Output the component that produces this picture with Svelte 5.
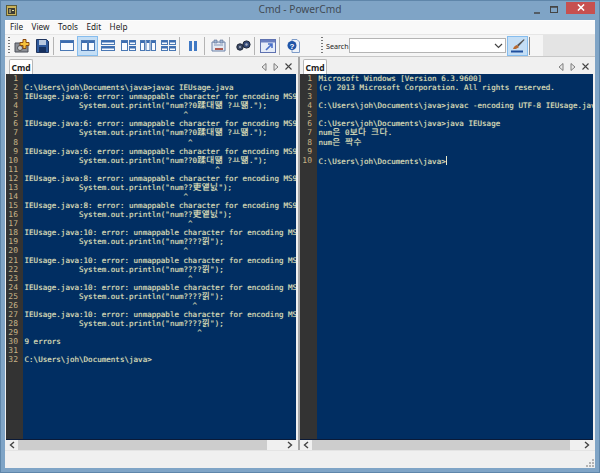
<script>
	const caret = (n) => ' '.repeat(n) + '^';
	const err = (n) => `IEUsage.java:${n}: error: unmappable character for encoding MS949`;
	const ind = (s) => `            System.out.println("num${s}");`;

	const leftLines = [
		'',
		'C:\\Users\\joh\\Documents\\java>javac IEUsage.java',
		err(6), ind('??0蹂대떎 ?ㅛ떎.'), caret(35),
		err(6), ind('??0蹂대떎 ?ㅛ떎.'), caret(36),
		err(6), ind('??0蹂대떎 ?ㅛ떎.'), caret(42),
		err(8), ind('??吏앹닔'), caret(35),
		err(8), ind('??吏앹닔'), caret(36),
		err(10), ind('????낅'), caret(35),
		err(10), ind('????낅'), caret(36),
		err(10), ind('????낅'), caret(37),
		err(10), ind('????낅'), caret(38),
		'9 errors',
		'',
		'C:\\Users\\joh\\Documents\\java>'
	];

	const rightLines = [
		'Microsoft Windows [Version 6.3.9600]',
		'(c) 2013 Microsoft Corporation. All rights reserved.',
		'',
		'C:\\Users\\joh\\Documents\\java>javac -encoding UTF-8 IEUsage.java',
		'',
		'C:\\Users\\joh\\Documents\\java>java IEUsage',
		'num은 0보다 크다.',
		'num은 짝수',
		'',
		'C:\\Users\\joh\\Documents\\java>'
	];

	// split a line into ascii runs and double-width runs
	function parts(line) {
		return line.split(/([^\x00-\x7f]+)/).map((text, i) => ({ text, wide: i % 2 === 1 }));
	}

	const panes = [
		{ id: 'left', lines: leftLines, cursor: false },
		{ id: 'right', lines: rightLines, cursor: true }
	];

	const menus = ['File', 'View', 'Tools', 'Edit', 'Help'];
</script>

<div class="window">
	<header class="title">
		<svg class="appicon" width="11" height="11" viewBox="0 0 11 11">
			<rect x="0.5" y="0.5" width="10" height="10" fill="#c9b25a" stroke="#5a5a3a" />
			<rect x="2" y="3" width="7" height="6" fill="#3c3c34" />
			<path d="M3 5h2M3 7h2M6 5.5h2" stroke="#e8e0a0" />
		</svg>
		<span class="caption">Cmd - PowerCmd</span>
		<div class="controls">
			<svg width="10" height="10" viewBox="0 0 10 10"><path d="M2 8h6" stroke="#444" stroke-width="1.5" /></svg>
			<svg width="10" height="10" viewBox="0 0 10 10"><rect x="1.5" y="1.5" width="7" height="6" fill="none" stroke="#444" /><path d="M1 2h8" stroke="#444" stroke-width="1.5" /></svg>
			<div class="close">
				<svg width="8" height="7" viewBox="0 0 9 8"><path d="M1 0.5l7 7M8 0.5l-7 7" stroke="#fff" stroke-width="1.7" /></svg>
			</div>
		</div>
	</header>

	<div class="client">
		<nav class="menubar">
			{#each menus as m}<span>{m}</span>{/each}
		</nav>

		<div class="toolbars">
			<div class="tb first">
				<div class="grip"></div>
				<div class="btn">
					<svg width="16" height="14" viewBox="0 0 16 14">
						<path d="M1 4h13v9H1z" fill="#8b8f96" stroke="#4a4f58" />
						<circle cx="6" cy="9" r="2.5" fill="#c8ccd0" stroke="#555" />
						<path d="M9 0.5h3v3h3v3h-3v3H9v-3H6v-3h3z" fill="#f6c23c" stroke="#8a4a10" />
					</svg>
				</div>
				<div class="btn">
					<svg width="13" height="14" viewBox="0 0 13 14">
						<path d="M0.5 0.5h10l2 2v11H0.5z" fill="#2f5a9c" stroke="#20355f" />
						<rect x="3" y="1" width="7" height="5" fill="#b9c9e0" />
						<rect x="3" y="8" width="7" height="5" fill="#16305e" />
					</svg>
				</div>
				<div class="sep"></div>
				<div class="btn">
					<svg class="lay" width="14" height="11" viewBox="0 0 14 11"><rect x="0.5" y="0.5" width="13" height="10" /><path class="bar" d="M1 2h12" /></svg>
				</div>
				<div class="btn active">
					<svg class="lay" width="14" height="11" viewBox="0 0 14 11"><rect x="0.5" y="0.5" width="6" height="10" /><rect x="7.5" y="0.5" width="6" height="10" /><path class="bar" d="M1 2h5M8 2h5" /></svg>
				</div>
				<div class="btn">
					<svg class="lay" width="14" height="11" viewBox="0 0 14 11"><rect x="0.5" y="0.5" width="13" height="4" /><rect x="0.5" y="6.5" width="13" height="4" /><path class="bar" d="M1 1.5h12M1 7.5h12" /></svg>
				</div>
				<div class="btn">
					<svg class="lay" width="15" height="11" viewBox="0 0 15 11"><rect x="0.5" y="0.5" width="6" height="10" /><rect x="8.5" y="0.5" width="6" height="4" /><rect x="8.5" y="6.5" width="6" height="4" /><path class="bar" d="M1 2h5M9 1.5h5M9 7.5h5" /></svg>
				</div>
				<div class="btn">
					<svg class="lay" width="16" height="11" viewBox="0 0 16 11"><rect x="0.5" y="0.5" width="4" height="10" /><rect x="6" y="0.5" width="4" height="10" /><rect x="11.5" y="0.5" width="4" height="10" /><path class="bar" d="M1 2h3M6.5 2h3M12 2h3" /></svg>
				</div>
				<div class="btn">
					<svg class="lay" width="15" height="11" viewBox="0 0 15 11"><rect x="0.5" y="0.5" width="6" height="4" /><rect x="8.5" y="0.5" width="6" height="4" /><rect x="0.5" y="6.5" width="6" height="4" /><rect x="8.5" y="6.5" width="6" height="4" /><path class="bar" d="M1 1.5h5M9 1.5h5M1 7.5h5M9 7.5h5" /></svg>
				</div>
				<div class="sep"></div>
				<div class="btn">
					<svg width="8" height="10" viewBox="0 0 8 10"><rect x="0" y="0" width="3" height="10" fill="#3f78c4" /><rect x="5" y="0" width="3" height="10" fill="#3f78c4" /></svg>
				</div>
				<div class="sep"></div>
				<div class="btn">
					<svg width="15" height="13" viewBox="0 0 15 13">
						<path d="M1 3h13v9H1z" fill="#e4eaf3" stroke="#6d82a8" />
						<path d="M3 1h3v3H3zM9 1h3v3H9z" fill="#9fb4d2" stroke="#5a6f96" stroke-width="0.6" />
						<path d="M4 10h8" stroke="#b05a50" stroke-width="2" />
						<path d="M3 6h9" stroke="#8296b8" />
					</svg>
				</div>
				<div class="sep"></div>
				<div class="btn">
					<svg width="15" height="11" viewBox="0 0 15 11">
						<circle cx="4" cy="7" r="3.2" fill="#3c4a66" stroke="#1f2738" />
						<circle cx="10.5" cy="4.5" r="3.6" fill="#354a78" stroke="#1f2738" />
						<circle cx="4" cy="7" r="1" fill="#a8b0c0" />
						<circle cx="10.5" cy="4.5" r="1.2" fill="#a8b0c0" />
					</svg>
				</div>
				<div class="sep"></div>
				<div class="btn">
					<svg width="16" height="14" viewBox="0 0 16 14">
						<rect x="0.5" y="0.5" width="15" height="13" fill="#e6ecf8" stroke="#5f72b0" />
						<rect x="1" y="1" width="14" height="2.5" fill="#6a7fc0" />
						<path d="M6 11l6-6M8 5h4v4" fill="none" stroke="#4a70c8" stroke-width="1.6" />
					</svg>
				</div>
				<div class="sep"></div>
				<div class="btn">
					<svg width="13" height="14" viewBox="0 0 13 14">
						<path d="M5 0.5h5l2.5 2.5v10.5H5z" fill="#eef3fa" stroke="#7f9cc8" />
						<circle cx="5" cy="6.5" r="4.5" fill="#1f55a8" />
						<text x="5" y="9.5" class="q">?</text>
					</svg>
				</div>
			</div>
			<div class="tb second">
				<div class="grip"></div>
				<label class="search" for="search">Search</label>
				<div class="combo">
					<input id="search" type="text" />
					<svg width="9" height="6" viewBox="0 0 9 6"><path d="M1 1l3.5 3.5L8 1" fill="none" stroke="#444" stroke-width="1.2" /></svg>
				</div>
				<div class="btn active brush">
					<svg width="15" height="15" viewBox="0 0 15 15">
						<path d="M14 1L7 7l1.5 1.5L14.5 2z" fill="#555" />
						<path d="M3 11c1-3 3-4 4-4l2 2c-1 1-3 2.5-6 2z" fill="#b86a30" />
						<path d="M1 13.5h12" stroke="#1f4f9e" stroke-width="2" />
					</svg>
				</div>
				<div class="sep last"></div>
			</div>
		</div>

		<div class="panes">
			{#each panes as pane (pane.id)}
				<section class="pane {pane.id}">
					<div class="tabs">
						<div class="tab">Cmd</div>
						<div class="tabnav">
							<svg width="6" height="8" viewBox="0 0 6 8"><path d="M5 0.5v7L1 4z" fill="#e8e8e8" stroke="#666" stroke-width="0.8" /></svg>
							<svg width="6" height="8" viewBox="0 0 6 8"><path d="M1 0.5v7L5 4z" fill="#e8e8e8" stroke="#666" stroke-width="0.8" /></svg>
							<svg width="7" height="7" viewBox="0 0 7 7"><path d="M0.5 0.5l6 6M6.5 0.5l-6 6" stroke="#444" stroke-width="1.1" /></svg>
						</div>
					</div>
					<div class="term">
						<div class="gutter">
							{#each pane.lines as _, i}<div class="num">{i + 1}</div>{/each}
						</div>
						<div class="code">
							{#each pane.lines as line, i}
								<div class="line">{#each parts(line) as p}{#if p.wide}<span class="wide-text">{p.text}</span>{:else}{p.text}{/if}{/each}{#if pane.cursor && i === pane.lines.length - 1}<span class="cursor"></span>{/if}</div>
							{/each}
						</div>
					</div>
					<div class="hscroll">
						<svg width="6" height="8" viewBox="0 0 6 8"><path d="M5 1L1.5 4 5 7" fill="none" stroke="#444" stroke-width="1.4" /></svg>
						<div class="thumb"></div>
						<svg width="6" height="8" viewBox="0 0 6 8"><path d="M1 1l3.5 3L1 7" fill="none" stroke="#444" stroke-width="1.4" /></svg>
					</div>
				</section>
			{/each}
		</div>

		<footer class="status">
			<svg width="9" height="9" viewBox="0 0 9 9" fill="#b4b4b4"><rect x="7" y="1" width="2" height="2" /><rect x="4" y="4" width="2" height="2" /><rect x="7" y="4" width="2" height="2" /><rect x="1" y="7" width="2" height="2" /><rect x="4" y="7" width="2" height="2" /><rect x="7" y="7" width="2" height="2" /></svg>
		</footer>
	</div>
</div>

<style>
	:global(body) {
		margin: 0;
	}
	.window {
		width: 600px;
		height: 473px;
		box-sizing: border-box;
		padding: 0 5px 5px;
		background: #7fa4c6;
		box-shadow: inset 0 0 0 1px #5f86aa;
		display: flex;
		flex-direction: column;
		font-family: 'Noto Sans', 'Liberation Sans', sans-serif;
		overflow: hidden;
	}
	.title {
		height: 20px;
		flex: none;
		display: flex;
		align-items: center;
		position: relative;
	}
	.appicon {
		margin-left: 1px;
	}
	.caption {
		position: absolute;
		left: 0;
		right: 0;
		top: 1px;
		text-align: center;
		font-size: 10.2px;
		line-height: 17px;
		color: #3f4a55;
	}
	.controls {
		margin-left: auto;
		display: flex;
		align-items: center;
		gap: 7px;
		height: 20px;
	}
	.close {
		width: 29px;
		height: 12px;
		margin-bottom: 5px;
		background: #c75050;
		display: flex;
		align-items: center;
		justify-content: center;
	}
	.client {
		flex: 1;
		min-height: 0;
		display: flex;
		flex-direction: column;
		background: #f0f0f0;
	}
	.menubar {
		height: 13px;
		flex: none;
		display: flex;
		gap: 8.5px;
		padding-left: 5px;
		font-size: 8.2px;
		line-height: 11px;
		color: #222;
		background: #f9f9f9;
		border-top: 1px solid #fdfdfd;
	}
	.toolbars {
		height: 21px;
		flex: none;
		display: flex;
		background: #e4e4e4;
		border-top: 1px solid #e6e6e6;
		border-bottom: 1px solid #c8c8c8;
	}
	.tb {
		display: flex;
		align-items: center;
		background: #f5f5f5;
	}
	.first {
		width: 315px;
		padding-left: 2px;
		box-sizing: border-box;
	}
	.second {
		width: 223px;
	}
	.grip {
		width: 2px;
		height: 17px;
		margin: 0 3px 0 1px;
		background: repeating-linear-gradient(#777 0 1px, transparent 1px 3px);
	}
	.first .grip {
		margin-right: 2px;
	}
	.btn {
		width: 20px;
		height: 20px;
		box-sizing: border-box;
		display: flex;
		align-items: center;
		justify-content: center;
		flex: none;
	}
	.active {
		background: #c4def5;
		border: 1px solid #86bdee;
		width: 21px;
	}
	.brush {
		margin-left: 1px;
	}
	.sep {
		width: 1px;
		height: 18px;
		margin: 0 3px 0 1px;
		background: #b4b4b4;
		flex: none;
	}
	.sep.last {
		background: #8a8a8a;
	}
	.lay rect {
		fill: #f8fbff;
		stroke: #4a78b4;
	}
	.lay .bar {
		fill: none;
		stroke: #3b6cb0;
		stroke-width: 2;
	}
	.q {
		font-family: 'Liberation Sans', sans-serif;
		font-size: 8px;
		font-weight: bold;
		text-anchor: middle;
		fill: #fff;
	}
	.search {
		font-size: 7.2px;
		color: #222;
		width: 23px;
		flex: none;
	}
	.combo {
		width: 157px;
		height: 15px;
		box-sizing: border-box;
		background: #fff;
		border: 1px solid #b4b4b4;
		display: flex;
		align-items: center;
		padding-right: 2px;
		flex: none;
	}
	.combo input {
		flex: 1;
		min-width: 0;
		border: 0;
		padding: 0;
		height: 100%;
		background: transparent;
	}
	.panes {
		flex: 1;
		min-height: 0;
		display: flex;
	}
	.pane {
		display: flex;
		flex-direction: column;
		min-width: 0;
		box-sizing: border-box;
	}
	.left {
		width: 293px;
		padding: 0 2px 0 1px;
	}
	.right {
		width: 297px;
		padding: 0 2px 0 0;
		border-left: 2px solid #a8a8a8;
	}
	.tabs {
		height: 17px;
		flex: none;
		display: flex;
		align-items: flex-end;
		padding-left: 3px;
	}
	.tab {
		height: 15px;
		width: 24px;
		box-sizing: border-box;
		background: #fff;
		border: 1px solid #b8b8b8;
		border-bottom: 0;
		border-radius: 2px 2px 0 0;
		font-size: 8.5px;
		font-weight: 700;
		line-height: 15px;
		text-align: center;
		color: #222;
	}
	.tabnav {
		margin-left: auto;
		display: flex;
		align-items: center;
		gap: 6px;
		height: 15px;
		padding-right: 4px;
	}
	.term {
		flex: 1;
		min-height: 0;
		display: flex;
		background: #012e62;
		border-bottom: 1px solid #0a1a38;
		overflow: hidden;
		font-family: 'DejaVu Sans Mono', 'Noto Sans CJK KR', monospace;
		font-size: 7.56px;
		text-rendering: geometricPrecision;
	}
	.gutter {
		width: 17px;
		flex: none;
		background: #333333;
		color: #c8b488;
		text-align: right;
		box-sizing: border-box;
	}
	.num {
		height: 9.08px;
		line-height: 9.08px;
		padding-right: 5px;
		font-size: 8px;
	}
	.code {
		flex: 1;
		min-width: 0;
		padding-left: 1.5px;
		color: #e4e4bc;
		text-shadow: 0 0 1px rgba(228, 228, 188, 0.45);
		overflow: hidden;
	}
	.line {
		height: 9.08px;
		line-height: 9.08px;
		white-space: pre;
	}
	.wide-text {
		font-family: 'Noto Sans CJK KR', sans-serif;
		font-size: 8.7px;
		letter-spacing: 0.4px;
		line-height: 0;
	}
	.cursor {
		display: inline-block;
		width: 1px;
		height: 9px;
		background: #e8e8c8;
		vertical-align: -1px;
	}
	.hscroll {
		height: 10px;
		flex: none;
		display: flex;
		align-items: center;
		gap: 3px;
		padding: 0 3px;
		background: #f0f0f0;
	}
	.thumb {
		flex: 1;
		height: 10px;
		margin-right: 17px;
		background: #cdcdcd;
	}
	.right .thumb {
		margin-right: 11px;
	}
	.status {
		height: 16px;
		flex: none;
		display: flex;
		justify-content: flex-end;
		align-items: flex-end;
		padding: 0 1px 1px 0;
		background: #f0f0f0;
		border-top: 1px solid #e4e4e4;
	}
</style>
